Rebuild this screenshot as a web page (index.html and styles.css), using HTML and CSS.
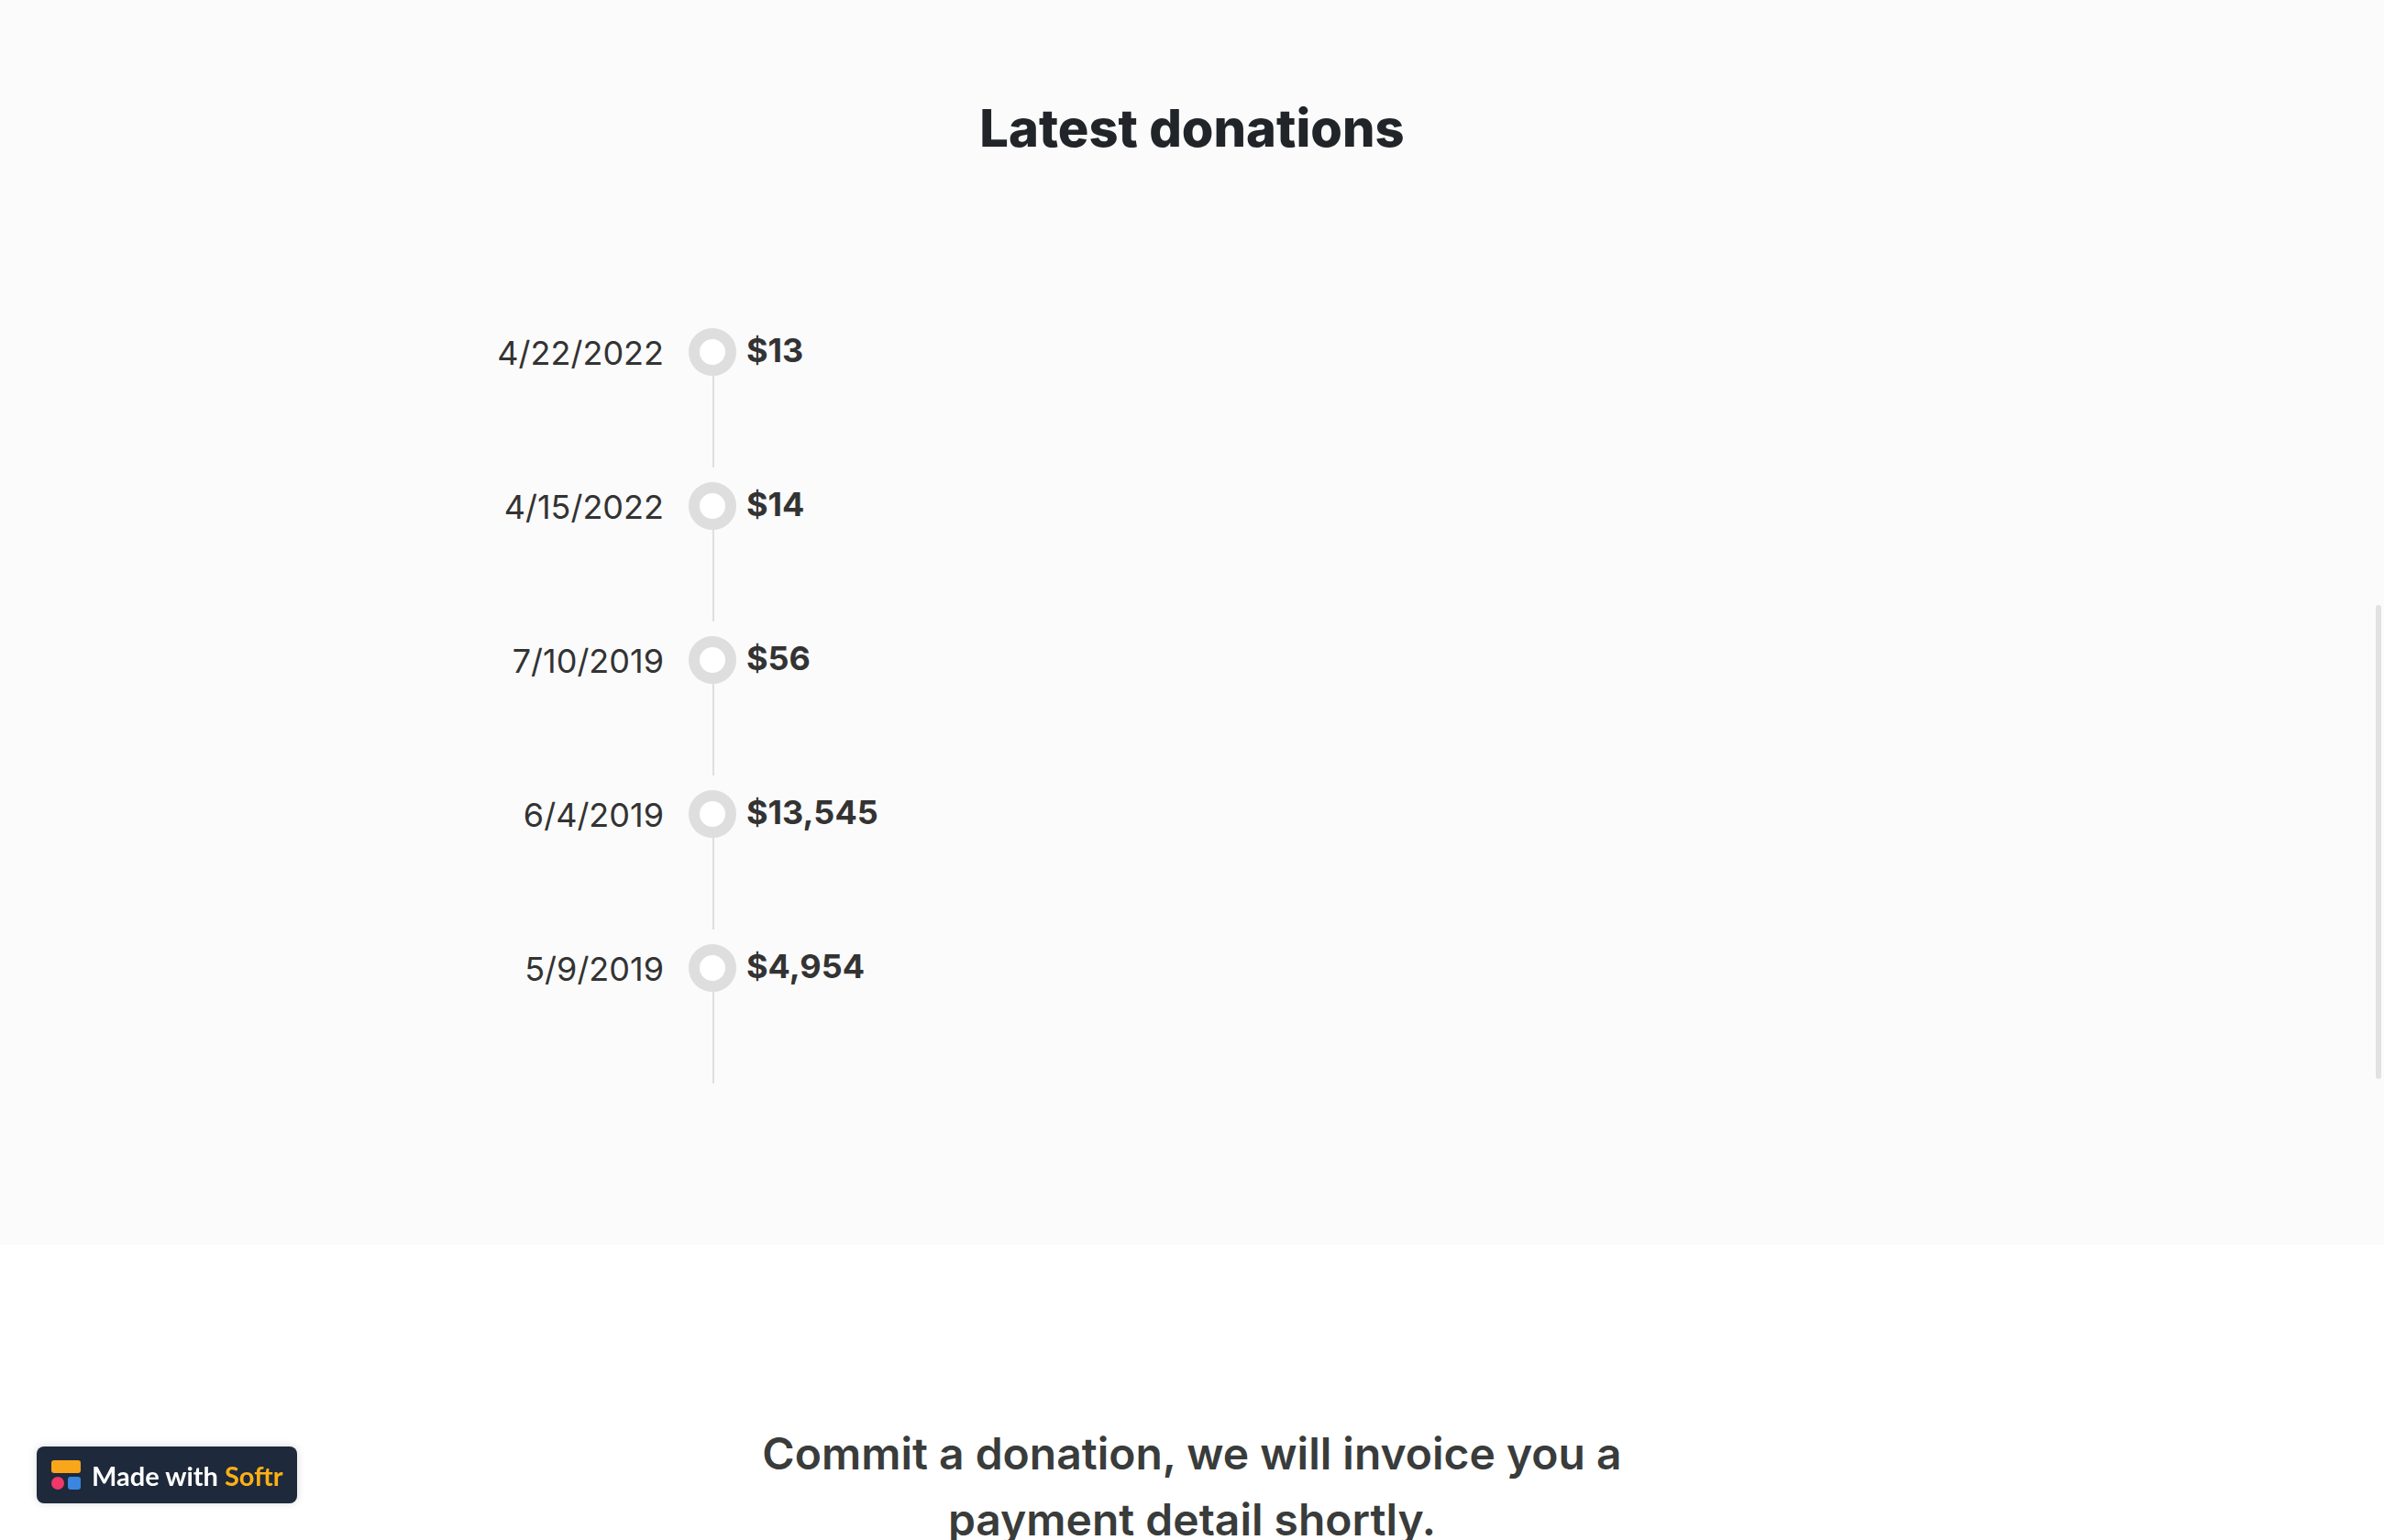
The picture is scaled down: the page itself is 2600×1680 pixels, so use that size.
FILE: index.html
```html
<!DOCTYPE html>
<html lang="en">
<head>
    <meta charset="UTF-8">
    <meta name="viewport" content="width=device-width, initial-scale=1.0">
    <title>Latest donations</title>
    <link rel="stylesheet" href="styles.css">
</head>
<body>
    <section class="donations">
        <h2 class="donations-title">Latest donations</h2>
        <ol class="timeline">
            <li class="timeline-item">
                <time class="date" datetime="2022-04-22">4/22/2022</time>
                <span class="marker"></span>
                <strong class="amount">$13</strong>
            </li>
            <li class="timeline-item">
                <time class="date" datetime="2022-04-15">4/15/2022</time>
                <span class="marker"></span>
                <strong class="amount">$14</strong>
            </li>
            <li class="timeline-item">
                <time class="date" datetime="2019-07-10">7/10/2019</time>
                <span class="marker"></span>
                <strong class="amount">$56</strong>
            </li>
            <li class="timeline-item">
                <time class="date" datetime="2019-06-04">6/4/2019</time>
                <span class="marker"></span>
                <strong class="amount">$13,545</strong>
            </li>
            <li class="timeline-item">
                <time class="date" datetime="2019-05-09">5/9/2019</time>
                <span class="marker"></span>
                <strong class="amount">$4,954</strong>
            </li>
        </ol>
    </section>

    <section class="commit">
        <h3 class="commit-title">Commit a donation, we will invoice you a payment detail shortly.</h3>
    </section>

    <a class="badge" href="#">
        <svg class="badge-logo" viewBox="0 0 32 32" aria-hidden="true">
            <rect x="0" y="0" width="32" height="14" rx="3" fill="#faa61a"/>
            <circle cx="7" cy="25" r="7" fill="#f0386b"/>
            <rect x="18" y="18" width="14" height="14" rx="3" fill="#3a86e0"/>
        </svg>
        <span>Made with <span class="badge-brand">Softr</span></span>
    </a>

    <div class="scroll-thumb"></div>
</body>
</html>
```
FILE: styles.css
```css
body {
    margin: 0;
    min-height: 100vh;
    overflow: hidden;
    background-color: #fff;
    color: #333;
    font-family: Inter, "Liberation Sans", sans-serif;
}

.donations {
    background-color: #fbfbfb;
    padding: 98px 32px 176px;
}

.donations-title {
    margin: 0 0 176px;
    color: #212529;
    font-size: 56px;
    font-weight: 800;
    line-height: 84px;
    text-align: center;
}

.timeline {
    max-width: 1600px;
    margin: 0 auto;
    padding: 0;
    list-style: none;
    font-size: 36px;
}

.timeline-item {
    display: flex;
    align-items: flex-start;
    margin-bottom: 16px;
}

.timeline-item:last-child {
    margin-bottom: 0;
}

.date {
    width: 224px;
    margin-right: 27px;
    line-height: 54px;
    text-align: right;
}

.marker {
    display: flex;
    flex-direction: column;
    width: 52px;
    margin-right: 11px;
}

.marker::before {
    content: "";
    box-sizing: border-box;
    width: 52px;
    height: 52px;
    border: 12px solid #dedede;
    border-radius: 50%;
    background-color: #fff;
}

.marker::after {
    content: "";
    height: 100px;
    margin-left: 50%;
    width: 2px;
    background-color: #dedede;
}

.amount {
    font-weight: 700;
    line-height: 48px;
}

.commit {
    padding: 192px 32px;
}

.commit-title {
    max-width: 1040px;
    margin: 0 auto;
    color: #393c3b;
    font-size: 48px;
    font-weight: 600;
    line-height: 72px;
    text-align: center;
}

.badge {
    position: fixed;
    left: 40px;
    bottom: 40px;
    display: flex;
    align-items: center;
    gap: 12px;
    height: 62px;
    padding: 0 16px;
    border-radius: 8px;
    background-color: #1e293b;
    box-shadow: 0 0 10px rgba(0, 0, 0, 0.15);
    color: #fff;
    font-family: Lato, "Open Sans", sans-serif;
    font-size: 29px;
    font-weight: 700;
    text-decoration: none;
}

.badge-logo {
    width: 32px;
    height: 32px;
}

.badge-brand {
    color: #fbb016;
}

.scroll-thumb {
    position: fixed;
    top: 660px;
    right: 3px;
    width: 6px;
    height: 517px;
    border-radius: 3px;
    background-color: #e2e2e2;
}
```
